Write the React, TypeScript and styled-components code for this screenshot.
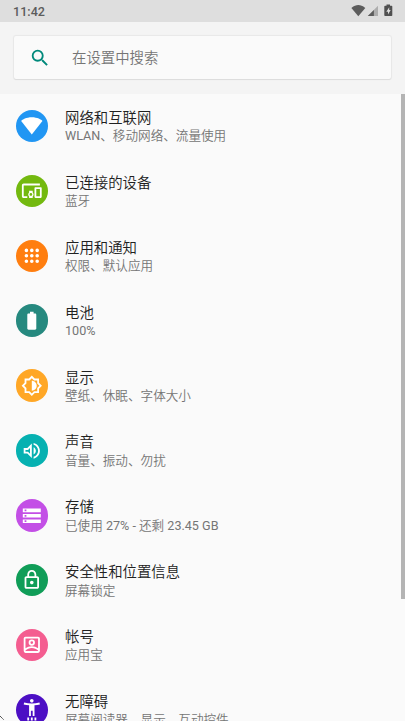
import React from "react";
import styled, { createGlobalStyle } from "styled-components";

const GlobalStyle = createGlobalStyle`
  html, body { margin: 0; height: 100%; overflow: hidden; }
  body { font-family: Roboto, "Noto Sans CJK SC", sans-serif; background: #fafafa; }
  #root { height: 100%; }
`;

const Screen = styled.div`
  position: relative;
  display: flex;
  flex-direction: column;
  height: 721px;
  width: 405px;
  overflow: hidden;
  background: #fafafa;
`;

const StatusBar = styled.header`
  flex: none;
  display: flex;
  justify-content: space-between;
  height: 22px;
  box-sizing: border-box;
  padding: 0 12px 0 13px;
  background: #dedede;
  color: #5c5c5c;
`;

const Clock = styled.time`
  font-size: 12.6px;
  font-weight: 500;
  line-height: 23px;
`;

const StatusIcons = styled.svg`
  display: block;
  width: 44px;
  height: 22px;
`;

const SearchArea = styled.div`
  flex: none;
  height: 72px;
  box-sizing: border-box;
  padding: 14px 14px 15px;
  background: #f4f4f4;
`;

const SearchCard = styled.div`
  display: flex;
  align-items: center;
  height: 43px;
  border-radius: 2px;
  background: #fafafa;
  box-shadow: 0 0 1px 1px rgba(0, 0, 0, 0.05), 0 1px 1px rgba(0, 0, 0, 0.06);
`;

const SearchIcon = styled.svg`
  width: 22px;
  height: 22px;
  margin: 0 21.5px 0 14.5px;
  fill: #00897b;
`;

const SearchHint = styled.span`
  padding-top: 2px;
  font-size: 14.4px;
  font-weight: 350;
  line-height: 20px;
  color: #757575;
`;

const Body = styled.main`
  flex: 1;
  min-height: 0;
  display: flex;
  justify-content: space-between;
`;

const List = styled.ul`
  list-style: none;
  margin: 0;
  padding: 0;
  flex: 1;
`;

const Row = styled.li`
  display: flex;
  height: 64.9px;
`;

const Badge = styled.div<{ $color: string }>`
  flex: none;
  display: grid;
  place-items: center;
  width: 32.4px;
  height: 32.4px;
  margin: 15.8px 16.6px 0 16px;
  border-radius: 50%;
  background: ${(p) => p.$color};
`;

const Glyph = styled.svg`
  width: 21.6px;
  height: 21.6px;
  fill: #fff;
`;

const Labels = styled.div`
  padding-top: 15px;
  white-space: nowrap;
`;

const Title = styled.div`
  font-size: 14.4px;
  font-weight: 350;
  line-height: 19px;
  color: #212121;
`;

const Summary = styled.div`
  margin-top: -0.7px;
  font-size: 12.6px;
  font-weight: 350;
  line-height: 17px;
  color: #757575;
`;

const Latin = styled.span`
  font-weight: 400;
`;

const ScrollThumb = styled.div`
  flex: none;
  width: 4px;
  height: 505px;
  background: #b4b4b4;
`;

const Pointer = styled.svg`
  position: absolute;
  left: 0;
  bottom: 0;
  width: 6px;
  height: 6px;
`;

const settings = [
  {
    title: "网络和互联网",
    summary: "WLAN、移动网络、流量使用",
    color: "#2196f3",
    path: "M12 21.8L23.800 6.600C22.500 5.200 18.200 2.600 12 2.600S1.500 5.200.2 6.600L12 21.800z",
  },
  {
    title: "已连接的设备",
    summary: "蓝牙",
    color: "#73b90f",
    path: "M3 6h18V4H3c-1.100 0-2 .9-2 2v12c0 1.100.9 2 2 2h4v-2H3V6zm10 6H9v1.780c-.61.550-1 1.330-1 2.220s.39 1.670 1 2.220V20h4v-1.780c.61-.550 1-1.340 1-2.220s-.39-1.670-1-2.220V12zm-2 5.500c-.83 0-1.500-.670-1.500-1.500s.67-1.500 1.500-1.500 1.500.670 1.500 1.500-.67 1.500-1.500 1.500zM22 8h-6c-.5 0-1 .5-1 1v10c0 .5.5 1 1 1h6c.5 0 1-.5 1-1V9c0-.5-.5-1-1-1zm-1 10h-4v-8h4v8z",
  },
  {
    title: "应用和通知",
    summary: "权限、默认应用",
    color: "#ff7e0f",
    path: "M6 8a2 2 0 1 0 0-4 2 2 0 0 0 0 4zm6 0a2 2 0 1 0 0-4 2 2 0 0 0 0 4zm6 0a2 2 0 1 0 0-4 2 2 0 0 0 0 4zM6 14a2 2 0 1 0 0-4 2 2 0 0 0 0 4zm6 0a2 2 0 1 0 0-4 2 2 0 0 0 0 4zm6 0a2 2 0 1 0 0-4 2 2 0 0 0 0 4zM6 20a2 2 0 1 0 0-4 2 2 0 0 0 0 4zm6 0a2 2 0 1 0 0-4 2 2 0 0 0 0 4zm6 0a2 2 0 1 0 0-4 2 2 0 0 0 0 4z",
  },
  {
    title: "电池",
    summary: "100%",
    color: "#26897f",
    path: "M15.670 4H14V2h-4v2H8.330C7.600 4 7 4.600 7 5.330v15.330C7 21.400 7.600 22 8.330 22h7.330c.740 0 1.340-.6 1.340-1.330V5.330C17 4.600 16.400 4 15.670 4z",
  },
  {
    title: "显示",
    summary: "壁纸、休眠、字体大小",
    color: "#ffa726",
    path: "M20 8.690V4h-4.690L12 .69 8.690 4H4v4.690L.69 12 4 15.310V20h4.690L12 23.310 15.310 20H20v-4.690L23.310 12 20 8.690zm-2 5.790V18h-3.520L12 20.480 9.520 18H6v-3.520L3.520 12 6 9.520V6h3.520L12 3.520 14.480 6H18v3.520L20.480 12 18 14.480zM12 6.500v11c3.030 0 5.500-2.470 5.500-5.500S15.030 6.500 12 6.500z",
  },
  {
    title: "声音",
    summary: "音量、振动、勿扰",
    color: "#06b1b1",
    path: "M3 9v6h4l5 5V4L7 9H3zm7-.17v6.340L7.830 13H5v-2h2.830L10 8.830zM16.500 12c0-1.770-1.020-3.290-2.500-4.030v8.050c1.480-.73 2.500-2.250 2.500-4.020zM14 3.230v2.060c2.890.86 5 3.540 5 6.710s-2.110 5.850-5 6.710v2.060c4.010-.91 7-4.490 7-8.770s-2.990-7.860-7-8.770z",
  },
  {
    title: "存储",
    summary: "已使用 27% - 还剩 23.45 GB",
    color: "#c34fe6",
    path: "M2 20h20v-4H2v4zm2-3h2v2H4v-2zM2 4v4h20V4H2zm4 3H4V5h2v2zm-4 7h20v-4H2v4zm2-3h2v2H4v-2z",
  },
  {
    title: "安全性和位置信息",
    summary: "屏幕锁定",
    color: "#109d58",
    path: "M18 8h-1V6c0-2.760-2.240-5-5-5S7 3.240 7 6v2H6c-1.100 0-2 .9-2 2v10c0 1.100.9 2 2 2h12c1.100 0 2-.9 2-2V10c0-1.100-.9-2-2-2zM9 6c0-1.660 1.340-3 3-3s3 1.340 3 3v2H9V6zm9 14H6V10h12v10zm-6-3c1.100 0 2-.9 2-2s-.9-2-2-2-2 .9-2 2 .9 2 2 2z",
  },
  {
    title: "帐号",
    summary: "应用宝",
    color: "#f45d90",
    path: "M19 3H5a2 2 0 0 0-2 2v14a2 2 0 0 0 2 2h14a2 2 0 0 0 2-2V5a2 2 0 0 0-2-2zm0 16H5v-.770C6.740 16.660 9.250 15.600 12 15.600s5.260 1.060 7 2.630V19zm0-3.160c-1.900-1.370-4.360-2.240-7-2.240s-5.100.87-7 2.240V5h14v10.840zM12 6a3.500 3.500 0 1 0 0 7 3.500 3.500 0 0 0 0-7zm0 5a1.500 1.500 0 1 1 0-3 1.500 1.500 0 0 1 0 3z",
  },
  {
    title: "无障碍",
    summary: "屏幕阅读器、显示、互动控件",
    color: "#4c0fc4",
    path: "M20.500 4c-2.610.7-5.670 1-8.500 1s-5.890-.3-8.500-1L3 6c1.860.5 4 .83 6 1v12h2v-6h2v6h2V7c2-.17 4.140-.5 6-1l-.5-2zM12 4c1.100 0 2-.9 2-2s-.9-2-2-2-2 .9-2 2 .9 2 2 2zM7 24h2v-3.500H7V24zm4 0h2v-3.500h-2V24zm4 0h2v-3.500h-2V24z",
  },
];

/* Latin runs keep the regular weight next to the lighter CJK glyphs. */
const mixedText = (text: string) =>
  text
    .split(/([ -~]+)/)
    .map((run, i) => (i % 2 ? <Latin key={i}>{run}</Latin> : run));

export default function App() {
  return (
    <>
      <GlobalStyle />
      <Screen>
        <StatusBar>
          <Clock>11:42</Clock>
          <StatusIcons viewBox="0 0 44 22">
            <path d="M2.400 8C5 5.800 7 5 9.300 5S13.600 5.800 16.300 8L9.300 16.200z" fill="#5c5c5c" />
            <path d="M29 5.800V16H18.800z" fill="#adadad" />
            <path d="M24.900 9.900V16H18.800z" fill="#5c5c5c" />
            <path d="M37.500 4.500h3.500v1.200h1.500a.8.8 0 0 1 .8.8v8.700a.8.8 0 0 1-.8.8h-6.400a.8.8 0 0 1-.8-.8V6.500a.8.8 0 0 1 .8-.8h1.400z" fill="#505050" />
            <path d="M40.200 7.200l-2.900 4.500h1.700v2.900l2.700-4.500h-1.500z" fill="#dedede" />
          </StatusIcons>
        </StatusBar>
        <SearchArea>
          <SearchCard>
            <SearchIcon viewBox="0 0 24 24">
              <path d="M15.500 14h-.79l-.28-.27A6.471 6.471 0 0 0 16 9.500 6.500 6.500 0 1 0 9.500 16c1.610 0 3.090-.59 4.230-1.570l.27.280v.790l5 4.990L20.490 19l-4.990-5zm-6 0C7.010 14 5 11.990 5 9.500S7.010 5 9.500 5 14 7.010 14 9.500 11.990 14 9.500 14z" />
            </SearchIcon>
            <SearchHint>在设置中搜索</SearchHint>
          </SearchCard>
        </SearchArea>
        <Body>
          <List>
            {settings.map((item) => (
              <Row key={item.title}>
                <Badge $color={item.color}>
                  <Glyph viewBox="0 0 24 24">
                    <path d={item.path} fillRule="evenodd" />
                  </Glyph>
                </Badge>
                <Labels>
                  <Title>{item.title}</Title>
                  <Summary>{mixedText(item.summary)}</Summary>
                </Labels>
              </Row>
            ))}
          </List>
          <ScrollThumb />
        </Body>
        <Pointer viewBox="0 0 6 6">
          <path d="M0 1l4 4" stroke="#333" strokeWidth="1" strokeDasharray="1.200 .5" fill="none" />
        </Pointer>
      </Screen>
    </>
  );
}
